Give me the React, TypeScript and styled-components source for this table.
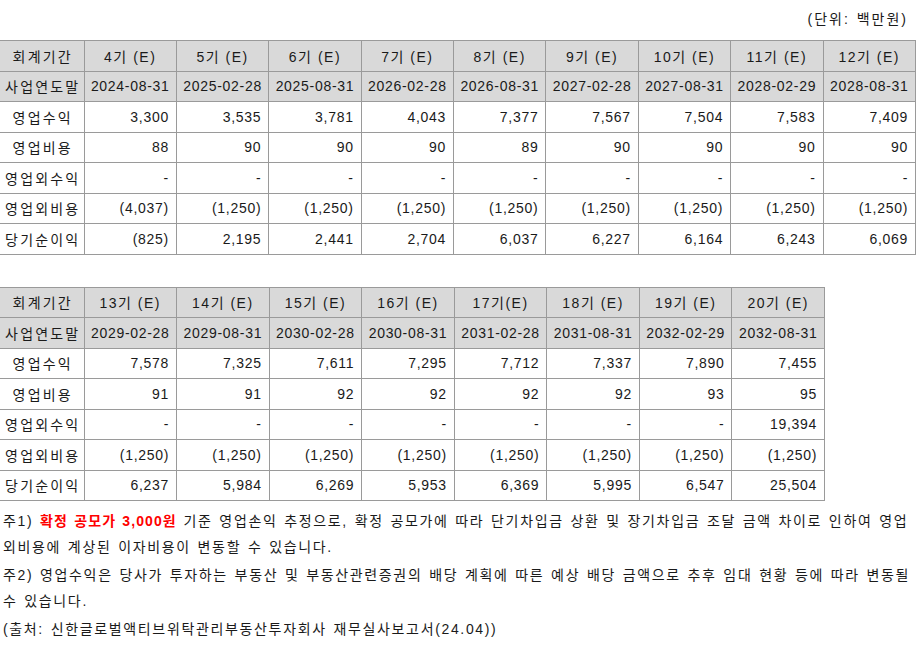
import React from "react";
import styled, { createGlobalStyle } from "styled-components";

const GlobalStyle = createGlobalStyle`
  html, body {
    margin: 0;
    padding: 0;
    background: #ffffff;
  }
  body {
    font-family: "Liberation Sans", "Noto Sans CJK KR", sans-serif;
    color: #1a1a1a;
  }
`;

const Page = styled.div`
  width: 917px;
  padding-top: 8px;
  font-size: 14px;
  letter-spacing: 0.7px;
`;

const UnitLine = styled.div`
  text-align: right;
  padding-right: 9px;
  line-height: 22px;
  height: 22px;
  margin-bottom: 10px;
  letter-spacing: 2px;
  word-spacing: 1px;
`;

const Table = styled.table<{ $width: number }>`
  width: ${(p) => p.$width}px;
  border-collapse: collapse;
  table-layout: fixed;
  border-top: 1px solid #222;
  border-bottom: 1px solid #222;
  border-right: 1px solid #222;
  margin-bottom: 32px;
`;

const Cell = styled.td`
  height: 29.5px;
  padding: 0 7px 0 4px;
  border: 1px solid #9a9a9a;
  white-space: nowrap;
  text-align: right;
`;

const LabelCell = styled(Cell)`
  border-left: none;
  padding: 0 0 0 2px;
  text-align: center;
  letter-spacing: 2.2px;
`;

const HeadCell = styled(Cell)<{ $wide?: boolean }>`
  background: #d9d9d9;
  text-align: center;
  padding: 0;
  letter-spacing: ${(p) => (p.$wide ? "1.5px" : "0.7px")};
`;

const HeadLabel = styled(LabelCell)`
  background: #d9d9d9;
`;

const Notes = styled.div`
  padding-left: 3px;
  margin-top: -25px;
  letter-spacing: 1.65px;
  word-spacing: 1.2px;
`;

const Note = styled.p`
  margin: 0 0 2px;
  line-height: 26px;
  white-space: nowrap;
`;

const Red = styled.b`
  color: #ff0000;
  letter-spacing: 1.1px;
`;

type Block = {
  periods: string[];
  dates: string[];
  rows: [string, string[]][];
};

const first: Block = {
  periods: ["4기 (E)", "5기 (E)", "6기 (E)", "7기 (E)", "8기 (E)", "9기 (E)", "10기 (E)", "11기 (E)", "12기 (E)"],
  dates: ["2024-08-31", "2025-02-28", "2025-08-31", "2026-02-28", "2026-08-31", "2027-02-28", "2027-08-31", "2028-02-29", "2028-08-31"],
  rows: [
    ["영업수익", ["3,300", "3,535", "3,781", "4,043", "7,377", "7,567", "7,504", "7,583", "7,409"]],
    ["영업비용", ["88", "90", "90", "90", "89", "90", "90", "90", "90"]],
    ["영업외수익", ["-", "-", "-", "-", "-", "-", "-", "-", "-"]],
    ["영업외비용", ["(4,037)", "(1,250)", "(1,250)", "(1,250)", "(1,250)", "(1,250)", "(1,250)", "(1,250)", "(1,250)"]],
    ["당기순이익", ["(825)", "2,195", "2,441", "2,704", "6,037", "6,227", "6,164", "6,243", "6,069"]],
  ],
};

const second: Block = {
  periods: ["13기 (E)", "14기 (E)", "15기 (E)", "16기 (E)", "17기(E)", "18기 (E)", "19기 (E)", "20기 (E)"],
  dates: ["2029-02-28", "2029-08-31", "2030-02-28", "2030-08-31", "2031-02-28", "2031-08-31", "2032-02-29", "2032-08-31"],
  rows: [
    ["영업수익", ["7,578", "7,325", "7,611", "7,295", "7,712", "7,337", "7,890", "7,455"]],
    ["영업비용", ["91", "91", "92", "92", "92", "92", "93", "95"]],
    ["영업외수익", ["-", "-", "-", "-", "-", "-", "-", "19,394"]],
    ["영업외비용", ["(1,250)", "(1,250)", "(1,250)", "(1,250)", "(1,250)", "(1,250)", "(1,250)", "(1,250)"]],
    ["당기순이익", ["6,237", "5,984", "6,269", "5,953", "6,369", "5,995", "6,547", "25,504"]],
  ],
};

const ForecastTable: React.FC<{ data: Block; width: number }> = ({ data, width }) => (
  <Table $width={width}>
    <colgroup>
      <col style={{ width: 84 }} />
      {data.periods.map((p) => (
        <col key={p} />
      ))}
    </colgroup>
    <tbody>
      <tr>
        <HeadLabel>회계기간</HeadLabel>
        {data.periods.map((p) => (
          <HeadCell key={p} $wide>
            {p}
          </HeadCell>
        ))}
      </tr>
      <tr>
        <HeadLabel>사업연도말</HeadLabel>
        {data.dates.map((d) => (
          <HeadCell key={d}>{d}</HeadCell>
        ))}
      </tr>
      {data.rows.map(([label, values]) => (
        <tr key={label}>
          <LabelCell>{label}</LabelCell>
          {values.map((v, i) => (
            <Cell key={i}>{v}</Cell>
          ))}
        </tr>
      ))}
    </tbody>
  </Table>
);

const App: React.FC = () => (
  <>
    <GlobalStyle />
    <Page>
      <UnitLine>(단위: 백만원)</UnitLine>
      <ForecastTable data={first} width={916} />
      <ForecastTable data={second} width={825} />
      <Notes>
        <Note>
          주1) <Red>확정 공모가 3,000원</Red> 기준 영업손익 추정으로, 확정 공모가에 따라 단기차입금 상환 및 장기차입금 조달 금액 차이로 인하여 영업
          <br />
          외비용에 계상된 이자비용이 변동할 수 있습니다.
        </Note>
        <Note>
          주2) 영업수익은 당사가 투자하는 부동산 및 부동산관련증권의 배당 계획에 따른 예상 배당 금액으로 추후 임대 현황 등에 따라 변동될
          <br />
          수 있습니다.
        </Note>
        <Note>(출처: 신한글로벌액티브위탁관리부동산투자회사 재무실사보고서(24.04))</Note>
      </Notes>
    </Page>
  </>
);

export default App;
